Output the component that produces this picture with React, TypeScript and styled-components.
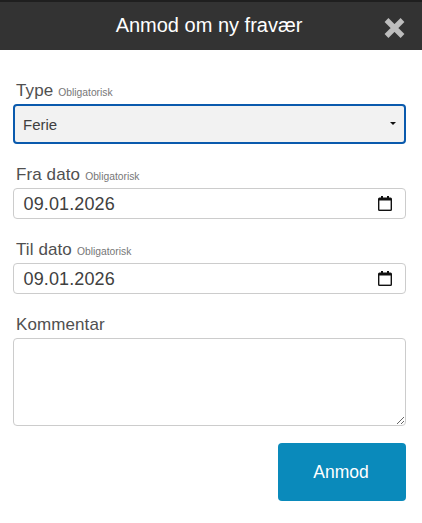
import React from 'react';
import styled, { createGlobalStyle } from 'styled-components';

const GlobalStyle = createGlobalStyle`
  html, body {
    margin: 0;
    padding: 0;
    background: #ffffff;
  }
  * {
    box-sizing: border-box;
  }
`;

const Page = styled.div`
  width: 422px;
  height: 523px;
  overflow: hidden;
  font-family: 'Liberation Sans', Arial, sans-serif;
  background: #ffffff;
`;

const Header = styled.header`
  height: 50px;
  display: flex;
  align-items: center;
  justify-content: center;
  position: relative;
  background: #333333;
  border-top: 2px solid #1f1f1f;
  padding: 0 4px 1px 0;
`;

const Title = styled.h1`
  margin: 0;
  font-size: 20px;
  font-weight: 400;
  color: #ffffff;
`;

const CloseButton = styled.button`
  position: absolute;
  right: 16px;
  top: 15px;
  width: 23px;
  height: 22px;
  padding: 0;
  border: 0;
  background: none;
  display: flex;
`;

const Form = styled.form`
  display: flex;
  flex-direction: column;
  padding: 29px 16px 0 13px;
`;

const Group = styled.div`
  display: flex;
  flex-direction: column;
  margin-bottom: 19px;
`;

const Label = styled.label`
  display: flex;
  align-items: baseline;
  height: 25px;
  padding: 2px 0 0 3px;
  font-size: 17px;
  letter-spacing: 0.1px;
  line-height: 20px;
  color: #505050;
`;

const Required = styled.span`
  margin-left: 5px;
  font-size: 10.3px;
  letter-spacing: 0;
  color: #777777;
`;

const SelectBox = styled.div`
  height: 40px;
  display: flex;
  align-items: center;
  justify-content: space-between;
  padding: 0 8px;
  background: #f2f2f2;
  border: 2px solid #0a5aad;
  border-radius: 4px;
  font-size: 15px;
  color: #3f3f3f;
`;

const Caret = styled.span`
  width: 0;
  height: 0;
  margin-bottom: 2px;
  border-left: 3px solid transparent;
  border-right: 3px solid transparent;
  border-top: 3px solid #111111;
`;

const DateBox = styled.div`
  height: 31px;
  display: flex;
  align-items: center;
  justify-content: space-between;
  padding: 0 13px 0 9.5px;
  border: 1px solid #cccccc;
  border-radius: 4px;
  font-size: 18px;
  letter-spacing: 0.12px;
  color: #404040;
`;

const DateText = styled.span`
  padding-top: 2px;
`;

const Comment = styled.textarea`
  display: block;
  width: 100%;
  height: 88px;
  padding: 6px 10px;
  border: 1px solid #cccccc;
  border-radius: 4px;
  background: #ffffff;
  font: inherit;
  resize: vertical;
  outline: none;
`;

const Actions = styled.div`
  display: flex;
  justify-content: flex-end;
  margin-top: -2px;
`;

const Submit = styled.button`
  width: 128px;
  height: 58px;
  padding: 0 2px 0 0;
  border: 0;
  border-radius: 4px;
  background: #0a8abb;
  color: #ffffff;
  font-family: inherit;
  font-size: 17.5px;
`;

const CloseIcon = () => (
  <svg width='23' height='22' viewBox='0 0 23 22'>
    <path d='M3.5 3L19.5 19M19.5 3L3.5 19' stroke='#bdbdbd' strokeWidth='5.4' fill='none' />
  </svg>
);

const CalendarIcon = () => (
  <svg width='14' height='15' viewBox='0 0 14 15'>
    <path d='M3 0h2v1.5h4V0h2v1.5h1.5A1.5 1.5 0 0 1 14 3v10.5a1.5 1.5 0 0 1-1.5 1.5h-11A1.5 1.5 0 0 1 0 13.5V3a1.5 1.5 0 0 1 1.5-1.5H3z' fill='#111111' />
    <rect x='1.4' y='4.5' width='11.2' height='9.1' fill='#ffffff' />
  </svg>
);

const DateField = ({ label }: { label: string }) => (
  <Group>
    <Label>
      {label}
      <Required>Obligatorisk</Required>
    </Label>
    <DateBox>
      <DateText>09.01.2026</DateText>
      <CalendarIcon />
    </DateBox>
  </Group>
);

const App = () => (
  <Page>
    <GlobalStyle />
    <Header>
      <Title>Anmod om ny fravær</Title>
      <CloseButton type='button' aria-label='Luk'>
        <CloseIcon />
      </CloseButton>
    </Header>
    <Form>
      <Group>
        <Label>
          Type
          <Required>Obligatorisk</Required>
        </Label>
        <SelectBox>
          Ferie
          <Caret />
        </SelectBox>
      </Group>
      <DateField label='Fra dato' />
      <DateField label='Til dato' />
      <Group>
        <Label>Kommentar</Label>
        <Comment />
      </Group>
      <Actions>
        <Submit type='button'>Anmod</Submit>
      </Actions>
    </Form>
  </Page>
);

export default App;
